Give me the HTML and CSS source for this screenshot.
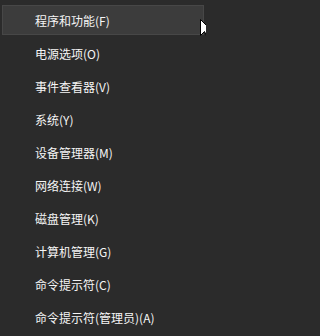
FILE: index.html
```html
<!DOCTYPE html>
<html lang="zh-CN">
<head>
<meta charset="utf-8">
<title>Win+X 菜单</title>
<link rel="stylesheet" href="styles.css">
</head>
<body>
<div class="menu">
  <div class="item active">程序和功能(F)</div>
  <div class="item">电源选项(O)</div>
  <div class="item">事件查看器(V)</div>
  <div class="item">系统(Y)</div>
  <div class="item">设备管理器(M)</div>
  <div class="item">网络连接(W)</div>
  <div class="item">磁盘管理(K)</div>
  <div class="item">计算机管理(G)</div>
  <div class="item">命令提示符(C)</div>
  <div class="item">命令提示符(管理员)(A)</div>
</div>
<svg class="cursor" width="12" height="19" viewBox="0 0 12 19"><path d="M0.5 0.5 L0.5 16.5 L4.5 12.5 L7.2 18.5 L9.5 17.5 L6.8 11.5 L11.5 11.5 Z" fill="#fff" stroke="#000" stroke-width="1"/></svg>
</body>
</html>
```
FILE: styles.css
```css
html, body {
  margin: 0;
  padding: 0;
}
body {
  width: 206px;
  height: 336px;
  background: #2b2b2b;
  overflow: hidden;
  position: relative;
  font-family: "Noto Sans CJK SC", "Microsoft YaHei", sans-serif;
}
.menu {
  display: flex;
  flex-direction: column;
  gap: 3px;
  padding: 5px 2px 0 2px;
}
.item {
  height: 30px;
  box-sizing: border-box;
  display: flex;
  align-items: center;
  padding-left: 32px;
  font-size: 12px;
  color: #f5f5f5;
  white-space: nowrap;
  border: 1px solid transparent;
}
.item.active {
  background: #3c3c3c;
  border-color: #474747;
}
.cursor {
  position: absolute;
  left: 200px;
  top: 19px;
}
```
